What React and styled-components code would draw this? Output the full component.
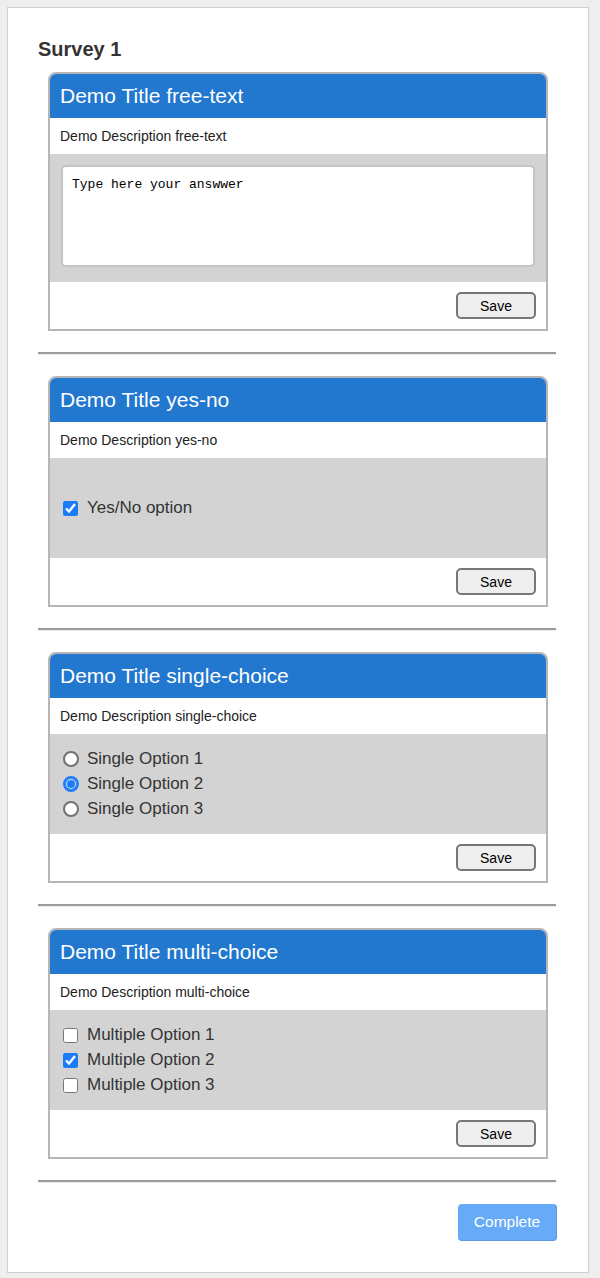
import React from 'react';
import styled, { createGlobalStyle } from 'styled-components';

const questions = [
  { id: 1, type: 'free-text' },
  { id: 2, type: 'yes-no' },
  { id: 3, type: 'single-choice', options: ['Single Option 1', 'Single Option 2', 'Single Option 3'], selected: [1] },
  { id: 4, type: 'multi-choice', options: ['Multiple Option 1', 'Multiple Option 2', 'Multiple Option 3'], selected: [1] },
];

const Answer = ({ q }) => {
  if (q.type === 'free-text') {
    return (
      <Body tall>
        <TextArea defaultValue="Type here your answwer" spellCheck={false} />
      </Body>
    );
  }
  if (q.type === 'yes-no') {
    return (
      <Body>
        <Option>
          <Check type="checkbox" defaultChecked />
          Yes/No option
        </Option>
      </Body>
    );
  }
  const radio = q.type === 'single-choice';
  return (
    <Body>
      {q.options.map((opt, i) => (
        <Option key={opt}>
          {radio ? (
            <Radio type="radio" name={`q${q.id}`} defaultChecked={q.selected.includes(i)} />
          ) : (
            <Check type="checkbox" defaultChecked={q.selected.includes(i)} />
          )}
          {opt}
        </Option>
      ))}
    </Body>
  );
};

const App = () => {
  return (
    <>
      <GlobalStyle />
      <Panel>
        <Heading>Survey 1</Heading>
        {questions.map((q) => (
          <React.Fragment key={q.id}>
            <Card>
              <CardTitle>Demo Title {q.type}</CardTitle>
              <CardDesc>Demo Description {q.type}</CardDesc>
              <Answer q={q} />
              <CardFooter>
                <SaveButton>Save</SaveButton>
              </CardFooter>
            </Card>
            <Divider />
          </React.Fragment>
        ))}
        <Actions>
          <CompleteButton>Complete</CompleteButton>
        </Actions>
      </Panel>
    </>
  );
};

export default App;

const GlobalStyle = createGlobalStyle`
  body {
    margin: 0;
    background: #eeeeee;
    font-family: "Liberation Sans", Arial, sans-serif;
  }
`

const Panel = styled.div`
  margin: 7px;
  width: 518px;
  background: #fff;
  border: 1px solid #cfcfcf;
  padding: 30px 32px 31px 30px;
`

const Heading = styled.h2`
  margin: 0 0 12px;
  font-size: 20px;
  line-height: 22px;
  font-weight: 700;
  color: #333;
`

const Card = styled.div`
  margin: 0 0 21px 10px;
  width: 496px;
  border: 2px solid #b7b5b5;
  border-radius: 8px 8px 0 0;
  background: #fff;
  overflow: hidden;
`

const CardTitle = styled.div`
  height: 44px;
  display: flex;
  align-items: center;
  padding: 0 10px;
  background: #2277cf;
  color: #fff;
  font-size: 21px;
`

const CardDesc = styled.div`
  height: 36px;
  display: flex;
  align-items: center;
  padding: 0 10px;
  font-size: 14px;
  color: #222;
`

const Body = styled.div`
  background: #d3d3d3;
  height: ${(p) => (p.tall ? '128px' : '100px')};
  box-sizing: border-box;
  padding: ${(p) => (p.tall ? '11px 11px' : '0 13px')};
  display: flex;
  flex-direction: column;
  justify-content: ${(p) => (p.tall ? 'flex-start' : 'center')};
`

const TextArea = styled.textarea`
  box-sizing: border-box;
  width: 100%;
  height: 102px;
  resize: none;
  border: 2px solid #c4c4c4;
  border-radius: 5px;
  padding: 10px 9px;
  font-family: "Liberation Mono", "Courier New", monospace;
  font-size: 13px;
  color: #000;
  background: #fff;
  outline: none;
`

const Option = styled.label`
  display: flex;
  align-items: center;
  height: 25px;
  font-size: 17px;
  color: #333;
`

const Check = styled.input`
  width: 15px;
  height: 15px;
  margin: 0 9px 0 0;
  accent-color: #1a7cf5;
`

const Radio = styled.input`
  appearance: none;
  width: 16px;
  height: 16px;
  margin: 0 8px 0 0;
  border-radius: 50%;
  border: 2px solid #727272;
  background: #fff;
  box-sizing: border-box;
  &:checked {
    border-color: #1f7cf5;
    background: #1f7cf5;
    box-shadow: inset 0 0 0 1px #1f7cf5, inset 0 0 0 2px #cfe2ff;
  }
`

const CardFooter = styled.div`
  height: 47px;
  box-sizing: border-box;
  padding: 10px 10px 0;
  display: flex;
  justify-content: flex-end;
  align-items: flex-start;
`

const SaveButton = styled.button`
  width: 80px;
  height: 27px;
  background: #efefef;
  border: 2px solid #777;
  border-radius: 5px;
  font-family: "Liberation Sans", Arial, sans-serif;
  font-size: 14px;
  color: #000;
`

const Divider = styled.hr`
  margin: 0 0 21px;
  border: 0;
  border-top: 2px solid #9c9c9c;
  border-bottom: 1px solid #ececec;
`

const Actions = styled.div`
  display: flex;
  justify-content: flex-end;
  margin-right: -1px;
`

const CompleteButton = styled.button`
  width: 99px;
  height: 37px;
  background: #66aaf8;
  border: 0;
  border-bottom: 1px solid #5b98de;
  border-right: 1px solid #5b98de;
  border-radius: 4px;
  color: #fff;
  font-family: "Liberation Sans", Arial, sans-serif;
  font-size: 15.5px;
`
